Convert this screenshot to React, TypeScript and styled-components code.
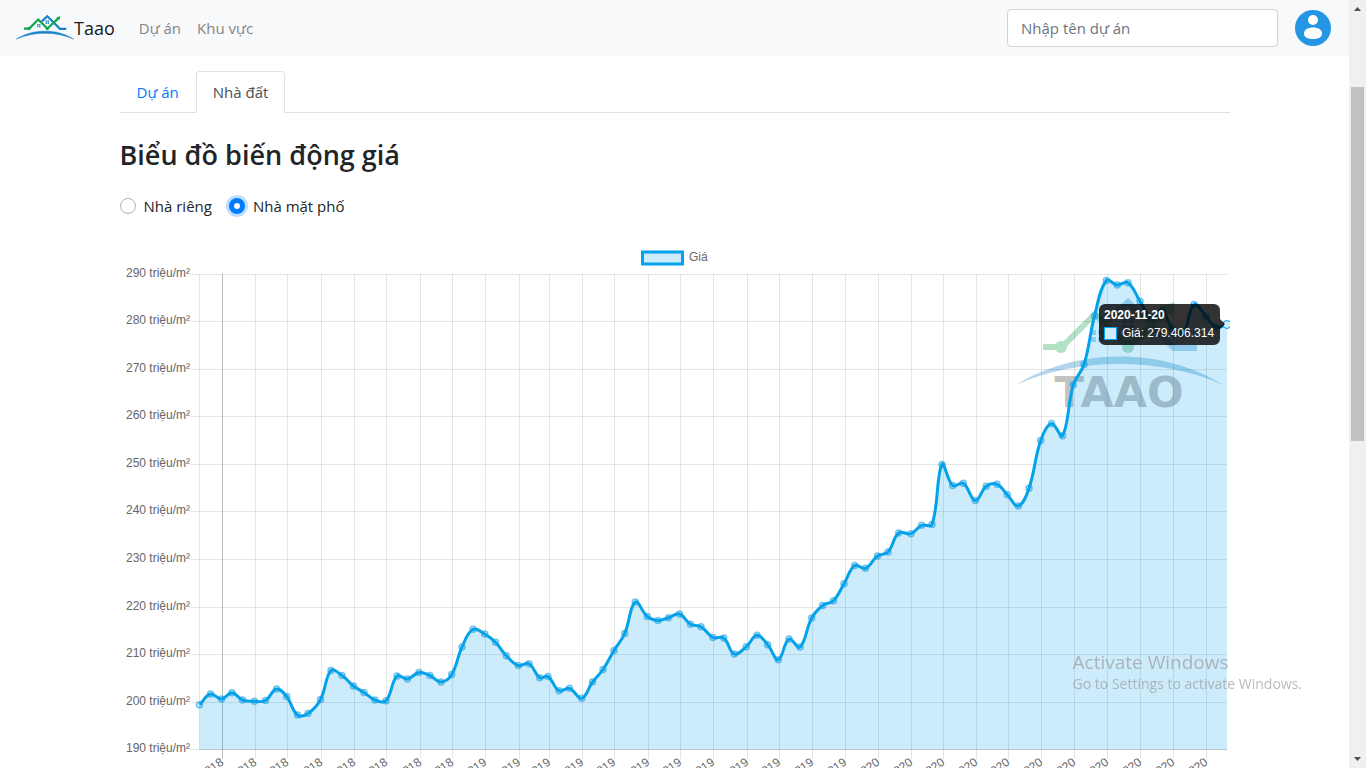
import React from 'react';
import styled, { createGlobalStyle } from 'styled-components';

const GlobalStyle = createGlobalStyle`
  *, *::before, *::after { box-sizing: border-box; }
  body {
    margin: 0;
    overflow: hidden;
    background: #fff;
    color: #212529;
    font-family: 'Open Sans', 'Noto Sans', sans-serif;
    font-size: 15px;
    line-height: 24px;
  }
`;

const Shell = styled.div`
  display: grid;
  grid-template-columns: minmax(0, 1fr) 17px;
  height: 100vh;
  overflow: hidden;
`;

const Page = styled.div`
  min-width: 0;
  overflow: hidden;
`;

const Navbar = styled.header`
  display: flex;
  align-items: center;
  height: 56px;
  padding: 0 18px 0 16px;
  background: #f8f9fa;
`;

const Brand = styled.a`
  display: flex;
  align-items: center;
  margin-right: 16px;
  color: #16191c;
  font-size: 18px;
  text-decoration: none;
`;

const BrandMark = styled.svg`
  width: 58px;
  height: 28px;
`;

const NavLinks = styled.nav`
  display: flex;
  flex: 1;
`;

const NavLink = styled.a`
  padding: 8px;
  color: #858687;
  text-decoration: none;
`;

const Search = styled.input`
  width: 271px;
  height: 38px;
  margin-right: 17px;
  padding: 6px 13px;
  border: 1px solid #ced4da;
  border-radius: 4px;
  background: #fff;
  font: inherit;
  &::placeholder { color: #6c757d; opacity: 1; }
`;

const AvatarButton = styled.button`
  display: block;
  padding: 0;
  border: 0;
  background: none;
  svg { display: block; width: 36px; height: 36px; }
`;

const Container = styled.main`
  max-width: 1140px;
  margin: 0 auto;
  padding: 15px 15px 0;
`;

const Tabs = styled.div`
  display: flex;
  border-bottom: 1px solid #dee2e6;
`;

const Tab = styled.a<{ $active?: boolean }>`
  margin-bottom: -1px;
  padding: 8px 16px;
  border: 1px solid;
  border-color: ${p => (p.$active ? '#dee2e6 #dee2e6 #fff' : 'transparent transparent #dee2e6')};
  border-radius: 4px 4px 0 0;
  background: ${p => (p.$active ? '#fff' : 'transparent')};
  color: ${p => (p.$active ? '#495057' : '#007bff')};
  text-decoration: none;
`;

const Title = styled.h3`
  margin: 24px 0 16px;
  font-size: 27px;
  font-weight: 600;
  line-height: 36px;
`;

const Choices = styled.div`
  display: flex;
  gap: 17px;
  margin-bottom: 22px;
  padding-top: 5px;
`;

const Choice = styled.label`
  display: flex;
  align-items: center;
  gap: 8px;
`;

const Radio = styled.input`
  appearance: none;
  width: 16px;
  height: 16px;
  margin: 0;
  border: 1px solid #adb5bd;
  border-radius: 50%;
  background: #fff;
  &:checked {
    border: 5px solid #007bff;
    box-shadow: 0 0 0 3px #bfdeff;
  }
`;

const ChartSvg = styled.svg`
  display: block;
  width: 100%;
  height: auto;
  font-family: 'Liberation Sans', Arial, sans-serif;
  font-size: 12px;
  fill: #666;
`;

const ScrollTrack = styled.div`
  display: flex;
  flex-direction: column;
  align-items: center;
  background: #f0f0f0;
`;

const ScrollArrow = styled.svg`
  flex: none;
  width: 17px;
  height: 17px;
  fill: #505050;
`;

const ScrollSpace = styled.div<{ $grow: number }>`
  flex: ${p => p.$grow} 0 0;
`;

const ScrollThumb = styled.div`
  flex: 354 0 0;
  width: 13px;
  background: #c1c1c1;
`;

const Activation = styled.div`
  position: fixed;
  right: 64px;
  bottom: 74px;
  color: rgba(150, 150, 150, 0.65);
  font-size: 14px;
  line-height: 20px;
  pointer-events: none;
  strong {
    display: block;
    font-size: 19px;
    font-weight: 400;
    line-height: 24px;
  }
`;

function LogoArt({ bold }: { bold?: boolean }) {
  const weight = bold ? 8 : 6;
  return (
    <g fill="none">
      <path d="M92 25L112 6L136 30L158 52H181" stroke="#1683c6" strokeWidth={weight} />
      <path d="M27 51H46L79 18L112 51L152 14" stroke="#12a551" strokeWidth={weight} />
      <circle cx="45" cy="51" r="6" fill="#12a551" />
      <circle cx="112" cy="51" r="6" fill="#12a551" />
      <path d="M145 10L159 6L156 21Z" fill="#12a551" />
      <path d="M75 34h5v5h-5zm7 0h5v5h-5zm-7 7h5v5h-5zm7 0h5v5h-5zM106 22h5v5h-5zm7 0h5v5h-5zm-7 7h5v5h-5zm7 0h5v5h-5z" fill="#1683c6" />
      <path
        d="M0 89C60 51 148 51 207 89C146 61 61 61 0 89Z"
        fill="#1683c6"
        stroke={bold ? '#1683c6' : 'none'}
        strokeWidth="2"
      />
    </g>
  );
}

type Point = [number, number];

const points: Point[] = [
  [199.5, 704.7], [210.5, 694], [221.5, 699], [232, 692.7], [242.5, 700], [254.5, 701.3], [265.5, 700.5],
  [276.5, 689], [286.7, 696.5], [297.5, 715], [308, 713.5], [320.5, 699.5], [331, 670.5], [342, 675.5],
  [353.5, 686], [364, 692.5], [375, 700], [386, 700.7], [397, 676], [407.5, 679], [419, 672.5], [430, 675.5],
  [441, 682], [451.7, 674.5], [462, 647], [473, 629.3], [484.7, 634], [495.5, 642.3], [506.3, 655.7],
  [518.3, 665.5], [529, 663.7], [539.7, 677.7], [548, 676.5], [559, 690.7], [569.5, 688.3], [581.7, 698.3],
  [592.5, 682], [603, 669.5], [614, 650.5], [624.7, 633.5], [635.3, 602], [647.3, 616.5], [658, 620.5],
  [668.5, 617.7], [679.5, 614], [690.5, 624.3], [701, 626.7], [713, 637.5], [723.7, 638], [734.3, 654],
  [746.3, 646.7], [757, 635.3], [767.7, 644.7], [778.3, 659.7], [789, 639], [800, 647], [811.7, 618],
  [822.7, 605.5], [833.5, 600.7], [844, 583.7], [854.7, 565.5], [865.5, 568.3], [877.5, 556], [888, 552],
  [898.7, 533], [911, 533.7], [921.5, 525.3], [932, 524.5], [942, 464.5], [952.7, 485.5], [963.3, 483.3],
  [975.3, 500.5], [986.3, 486.3], [997, 484.3], [1007.3, 494.7], [1018.3, 506], [1029, 488.3],
  [1040.7, 440.5], [1051.5, 423.5], [1062.5, 435.7], [1073.3, 384.7], [1084, 364.5], [1094.5, 316],
  [1106.3, 280.5], [1117.3, 285], [1128, 282.7], [1140, 301.3], [1151, 318], [1162, 310], [1172, 328],
  [1183, 333], [1194, 304.5], [1206, 316.5], [1216, 327], [1227, 324.5],
].map(([x, y]) => [x - 120, y - 240]);

const AREA = { left: 79.5, right: 1107, top: 34.5, bottom: 509.5 };

const ticks = [
  222, 255, 287, 321, 354, 386, 420, 452, 485, 519, 549, 582, 614, 648, 680, 713, 747, 779, 812, 845, 878,
  911, 943, 976, 1008, 1041, 1074, 1107, 1140, 1173, 1206,
].map(x => x - 119.5);

const levels: Point[] = [
  [290, 34], [280, 81], [270, 129], [260, 176], [250, 224], [240, 271], [230, 319], [220, 367], [210, 414],
  [200, 462], [190, 509],
];

const clampY = (y: number) => Math.min(AREA.bottom, Math.max(AREA.top, y));

// Cubic spline whose control points are weighted by the distance to each neighbour.
function splinePath(data: Point[], tension = 0.4) {
  const controls = data.map((p, i) => {
    const prev = data[i - 1] ?? p;
    const next = data[i + 1] ?? p;
    const before = Math.hypot(p[0] - prev[0], p[1] - prev[1]);
    const after = Math.hypot(next[0] - p[0], next[1] - p[1]);
    const a = (tension * before) / (before + after);
    const b = (tension * after) / (before + after);
    const dx = next[0] - prev[0];
    const dy = next[1] - prev[1];
    return {
      inn: [p[0] - a * dx, clampY(p[1] - a * dy)],
      out: [p[0] + b * dx, clampY(p[1] + b * dy)],
    };
  });
  return data
    .map((p, i) => (i === 0 ? `M${p}` : `C${controls[i - 1].out} ${controls[i].inn} ${p}`))
    .join('');
}

const linePath = splinePath(points);
const fillPath = `${linePath}V${AREA.bottom}H${AREA.left}Z`;
const BLUE = '#02a2ec';

function PriceChart() {
  return (
    <ChartSvg viewBox="0 0 1110 555" role="img" aria-label="Giá">
      <g transform="translate(896 56)" opacity="0.32">
        <LogoArt />
        <text x="103" y="111" textAnchor="middle" fontFamily="'DejaVu Sans', sans-serif" fontWeight="700" fontSize="43" fill="#444">TAAO</text>
      </g>

      <rect x="522.5" y="12" width="40" height="12" fill="#cdebfb" stroke={BLUE} strokeWidth="3" />
      <text x="569" y="21">Giá</text>

      <g stroke="#000" strokeOpacity="0.1">
        {levels.map(([level, y]) => (
          <path key={level} d={`M70 ${y + 0.5}H1107`} />
        ))}
        <path d="M79.5 34V509" />
        {ticks.map((x, i) => (
          <path key={x} d={`M${x} 34V519`} strokeOpacity={i === 0 ? 0.25 : 0.1} />
        ))}
        <path d="M79 509.5H1107" />
      </g>
      {levels.map(([level, y]) => (
        <text key={level} x="70" y={y + 3} textAnchor="end">{level} triệu/m²</text>
      ))}
      {ticks.map((x, i) => (
        <text key={x} textAnchor="end" transform={`translate(${x + 2} 524) rotate(-35)`}>
          {i < 8 ? 2018 : i < 20 ? 2019 : 2020}
        </text>
      ))}

      <path d={fillPath} fill={BLUE} fillOpacity="0.2" />
      <path d={linePath} fill="none" stroke={BLUE} strokeWidth="3" strokeLinejoin="round" />
      <g fill={BLUE} fillOpacity="0.2" stroke="#1c9fde" strokeOpacity="0.6" strokeWidth="1.5">
        {points.map(([x, y]) => (
          <circle key={x} cx={x} cy={y} r="3" />
        ))}
      </g>
      <circle cx="1107" cy="84.5" r="4" fill="#cdebfb" stroke={BLUE} />

      <path
        d="M985 64h109a6 6 0 0 1 6 6v9l5 5l-5 5v10a6 6 0 0 1-6 6h-109a6 6 0 0 1-6-6v-29a6 6 0 0 1 6-6z"
        fill="#000"
        fillOpacity="0.8"
      />
      <g fill="#fff">
        <text x="984" y="79" fontWeight="700">2020-11-20</text>
        <rect x="984.5" y="87.5" width="12" height="12" fill="#cdebfb" stroke={BLUE} />
        <text x="1002" y="97">Giá: 279.406.314</text>
      </g>
    </ChartSvg>
  );
}

export default function App() {
  return (
    <>
      <GlobalStyle />
      <Shell>
        <Page>
          <Navbar>
            <Brand href="#">
              <BrandMark viewBox="-2 0 211 98" aria-hidden="true">
                <LogoArt bold />
              </BrandMark>
              Taao
            </Brand>
            <NavLinks>
              <NavLink href="#du-an">Dự án</NavLink>
              <NavLink href="#khu-vuc">Khu vực</NavLink>
            </NavLinks>
            <Search type="search" placeholder="Nhập tên dự án" aria-label="Nhập tên dự án" />
            <AvatarButton type="button" aria-label="Tài khoản">
              <svg viewBox="0 0 36 36">
                <circle cx="18" cy="18" r="18" fill="#2496e3" />
                <circle cx="18" cy="10" r="5" fill="#fff" />
                <path d="M9 23.500C9 19.500 13 17.500 18 17.500S27 19.500 27 23.500S23 29 18 29S9 27.500 9 23.500Z" fill="#fff" />
              </svg>
            </AvatarButton>
          </Navbar>
          <Container>
            <Tabs>
              <Tab href="#tab-du-an">Dự án</Tab>
              <Tab href="#tab-nha-dat" $active>Nhà đất</Tab>
            </Tabs>
            <Title>Biểu đồ biến động giá</Title>
            <Choices>
              <Choice>
                <Radio type="radio" name="kind" />
                Nhà riêng
              </Choice>
              <Choice>
                <Radio type="radio" name="kind" defaultChecked />
                Nhà mặt phố
              </Choice>
            </Choices>
            <PriceChart />
          </Container>
        </Page>
        <ScrollTrack aria-hidden="true">
          <ScrollArrow viewBox="0 0 17 17"><path d="M5 11L8.500 7L12 11Z" /></ScrollArrow>
          <ScrollSpace $grow={70} />
          <ScrollThumb />
          <ScrollSpace $grow={310} />
          <ScrollArrow viewBox="0 0 17 17"><path d="M5 6L8.500 10L12 6Z" /></ScrollArrow>
        </ScrollTrack>
      </Shell>
      <Activation>
        <strong>Activate Windows</strong>
        Go to Settings to activate Windows.
      </Activation>
    </>
  );
}
